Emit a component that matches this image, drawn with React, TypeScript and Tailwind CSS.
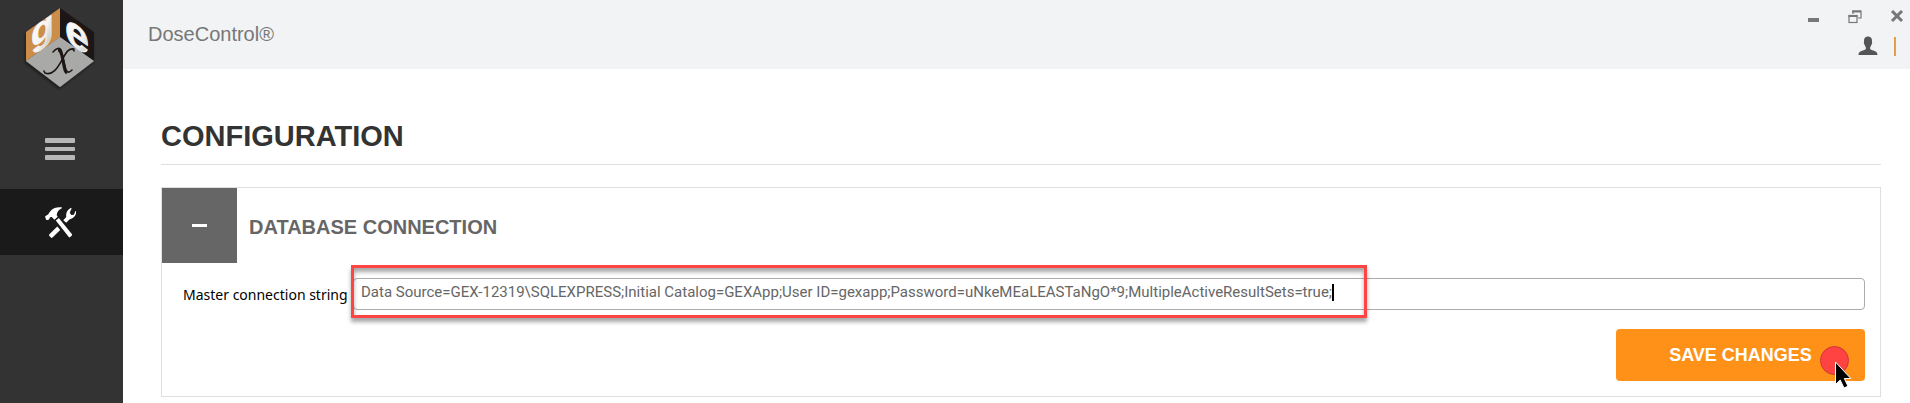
import React from "react";

function Logo() {
  return (
    <svg viewBox="0 0 72 84" className="h-21 w-18 overflow-visible" role="img" aria-label="GEX">
      <defs>
        <linearGradient id="chrome" x1="0" y1="0" x2="1" y2="1">
          <stop offset="0" stopColor="#ffffff" />
          <stop offset="0.6" stopColor="#f4f4f4" />
          <stop offset="1" stopColor="#b5b5b5" />
        </linearGradient>
        <filter id="cubeShadow" x="-20%" y="-20%" width="140%" height="140%">
          <feDropShadow dx="-1" dy="2" stdDeviation="1.5" floodColor="#000" floodOpacity="0.5" />
        </filter>
      </defs>
      <g filter="url(#cubeShadow)">
        <path d="M36 2 2 26v29l34-24z" fill="#cc8d48" />
        <path d="M36 2l34 24v29L36 31z" fill="#1d1614" />
        <path d="M36 31 70 55 36 81 2 55z" fill="#a9aaa8" />
      </g>
      <g fontFamily="'Liberation Sans', sans-serif" fontWeight="700" fill="url(#chrome)" stroke="#f4f4f4" strokeWidth="0.8">
        <text transform="translate(7 43) skewY(-35)" fontSize="37">g</text>
        <text transform="translate(41 34) skewY(35)" fontSize="43">e</text>
      </g>
      <path
        d="M31 44c4-3 6-2 7 3l3 13c1 6 3 8 7 4M50 43c-6-1-8 4-12 11S29 70 21 67M31 44l-2 2M49 43l1 2M21 67l-1-2"
        fill="none"
        stroke="#1d1614"
        strokeWidth="1.6"
        strokeLinecap="round"
      />
      <path d="M34 44c2 0 3 2 4 6l2 10c1 4 1 6 3 7" fill="none" stroke="#1d1614" strokeWidth="3" />
    </svg>
  );
}

function MenuIcon() {
  return (
    <svg viewBox="0 0 30 22" className="h-[22px] w-[30px]" fill="#b7b7b7" aria-hidden="true">
      <rect width="30" height="5" rx="1" />
      <rect y="9" width="30" height="4" rx="1" />
      <rect y="17" width="30" height="5" rx="1" />
    </svg>
  );
}

function ToolsIcon() {
  return (
    <svg viewBox="0 0 31 31" className="size-[31px]" fill="#ffffff" aria-hidden="true">
      <path d="M16.800.3C12-.2 8.500.8 6.200 3.200L3.800 6.200C3.400 7.600 2.200 8 .9 8.700L0 9.800l1.300 3.300 1.800-.1 1.300-1.100c.1-1.500.9-2.200 2.600-1.700l2.400 2.600 3.300-3.100-1-1.500c.3-3.200 1.900-5.600 5.100-6.900z" />
      <path d="M10.800 13.600l3-2.500L27 27.300c.3.500.2.900-.2 1.300l-1.500 1.500c-.5.400-1 .4-1.500-.1z" />
      <path d="M12.300 19.600l2.900 3.400-7.700 7.500c-.6.500-1.100.5-1.600 0l-1.500-1.600c-.5-.5-.5-1.100 0-1.600z" />
      <path d="M18.300 13.300l3-3.200c-.7-3.800.7-7.400 4.800-9.300l.5.700-1.900 4.300 1.600 2.300 2.600-.3 1.500-3.700.8.100c.2 4.300-2.400 7.500-6.800 8.200l-3.200 3.400z" />
    </svg>
  );
}

function UserIcon() {
  return (
    <svg viewBox="0 0 20 20" className="size-5" fill="#555555" aria-hidden="true">
      <path d="M10 .4c2.700 0 4.100 1.700 4 4.200-.1 1.200-.1 1.500.2 2.200-.1 1.400-.7 1.600-1 2.400-.3 1-.8 1.600-1 2.100v1.600c.3.700 1.500 1 3 1.700 2.500 1 4.200 1.500 4.300 4.400H.5c.1-2.900 1.800-3.400 4.300-4.400 1.500-.7 2.700-1 3-1.700v-1.600c-.2-.5-.7-1.100-1-2.100-.3-.8-.9-1-1-2.400.3-.7.3-1 .2-2.200C5.900 2.100 7.300.4 10 .4z" />
    </svg>
  );
}

function WindowControls() {
  return (
    <div className="flex items-center gap-7">
      <button type="button" aria-label="Minimize">
        <svg viewBox="0 0 14 14" className="size-3.5">
          <path d="M2 8h11v4H2z" fill="#777777" />
        </svg>
      </button>
      <button type="button" aria-label="Restore">
        <svg viewBox="0 0 14 14" className="size-3.5" fill="none" stroke="#777777">
          <path d="M5 4V1h8v7h-3" strokeWidth="1.200" />
          <path d="M4 1.500h9" strokeWidth="2" />
          <rect x="1" y="5.500" width="8" height="7" strokeWidth="1.200" />
          <path d="M.5 6h9" strokeWidth="2" />
        </svg>
      </button>
      <button type="button" aria-label="Close">
        <svg viewBox="0 0 14 14" className="size-3.5">
          <path d="M2 1l10 10M12 1L2 11" stroke="#777777" strokeWidth="3" />
        </svg>
      </button>
    </div>
  );
}

function Pointer() {
  return (
    <span className="pointer-events-none absolute right-4 top-[17px] size-[29px] rounded-full border border-[#c93a35] bg-[#ff4343]">
      <svg viewBox="0 0 20 30" className="absolute left-3.5 top-3.5 h-[30px] w-5" aria-hidden="true">
        <path
          d="M.5 1v22.500l4.700-4.500 3.800 8 4-1.800-3.700-7.700h6.500z"
          fill="#000000"
          stroke="#ffffff"
          strokeWidth="1"
        />
      </svg>
    </span>
  );
}

export default function App() {
  return (
    <div className="flex min-h-screen bg-white font-['Liberation_Sans',Arial,sans-serif]">
      <aside className="w-[123px] shrink-0 bg-[#333333]">
        <div className="flex justify-center pt-1.5 pr-[3px]">
          <Logo />
        </div>
        <nav className="mt-8">
          <button type="button" aria-label="Menu" className="flex h-[67px] w-full items-center justify-center pr-[3px] pb-3.5">
            <MenuIcon />
          </button>
          <a href="#configuration" aria-label="Configuration" className="flex h-[66px] w-full items-center justify-center bg-[#1a1a1a] pr-[3px]">
            <ToolsIcon />
          </a>
        </nav>
      </aside>

      <div className="min-w-0 flex-1">
        <header className="flex h-[69px] items-start justify-between bg-[#f1f3f5] pl-[25px]">
          <div className="pt-5 text-xl text-[#777777]">DoseControl®</div>
          <div className="flex flex-col items-end pt-[10px] pr-1.5">
            <WindowControls />
            <div className="mt-3 flex items-center gap-4 pr-2">
              <button type="button" aria-label="User account">
                <UserIcon />
              </button>
              <span className="h-[19px] w-0.5 border-l border-[#e09a4a] bg-[#7db8ea]" />
            </div>
          </div>
        </header>

        <main className="pt-[50px] pr-[29px] pl-[38px]">
          <h1 className="border-b border-[#dcdfe3] pb-[11px] text-[29px] leading-[34px] font-bold text-[#333333]">
            CONFIGURATION
          </h1>

          <section className="mt-[22px] border border-[#dfdfdf] pb-[15px]">
            <div className="flex items-center gap-3">
              <button type="button" aria-label="Collapse database connection" className="flex size-[75px] items-center justify-center bg-[#666666]">
                <span className="h-[3px] w-[15px] bg-white" />
              </button>
              <h2 className="pt-0.5 text-xl font-bold text-[#666666]">DATABASE CONNECTION</h2>
            </div>

            <form className="pr-[15px] pl-[21px]">
              <div className="flex items-center pt-[15px]">
                <label htmlFor="connection" className="w-[170px] shrink-0 pt-0.5 font-['Noto_Sans',sans-serif] text-sm whitespace-nowrap text-black">
                  Master connection string
                </label>
                <div className="relative min-w-0 flex-1">
                  <input
                    id="connection"
                    type="text"
                    defaultValue="Data Source=GEX-12319\SQLEXPRESS;Initial Catalog=GEXApp;User ID=gexapp;Password=uNkeMEaLEASTaNgO*9;MultipleActiveResultSets=true;"
                    className="block h-8 w-full rounded-sm border border-[#ababab] bg-white px-[7px] pb-1 font-['Roboto','Liberation_Sans',sans-serif] text-[15px] text-[#666666] outline-none"
                  />
                  <div className="pointer-events-none absolute -top-[13px] -left-0.5 h-[53px] w-[1016px] border-3 border-[#ff4444] shadow-[0_4px_4px_rgba(0,0,0,0.35),inset_0_4px_4px_rgba(0,0,0,0.35)]">
                    <span className="absolute top-4 right-[30px] h-[17px] w-0.5 bg-black" />
                  </div>
                </div>
              </div>
              <div className="flex justify-end pt-[19px]">
                <button type="button" className="relative h-[52px] w-[249px] rounded bg-[#ff9119] text-lg font-bold text-white">
                  SAVE CHANGES
                  <Pointer />
                </button>
              </div>
            </form>
          </section>
        </main>
      </div>
    </div>
  );
}
